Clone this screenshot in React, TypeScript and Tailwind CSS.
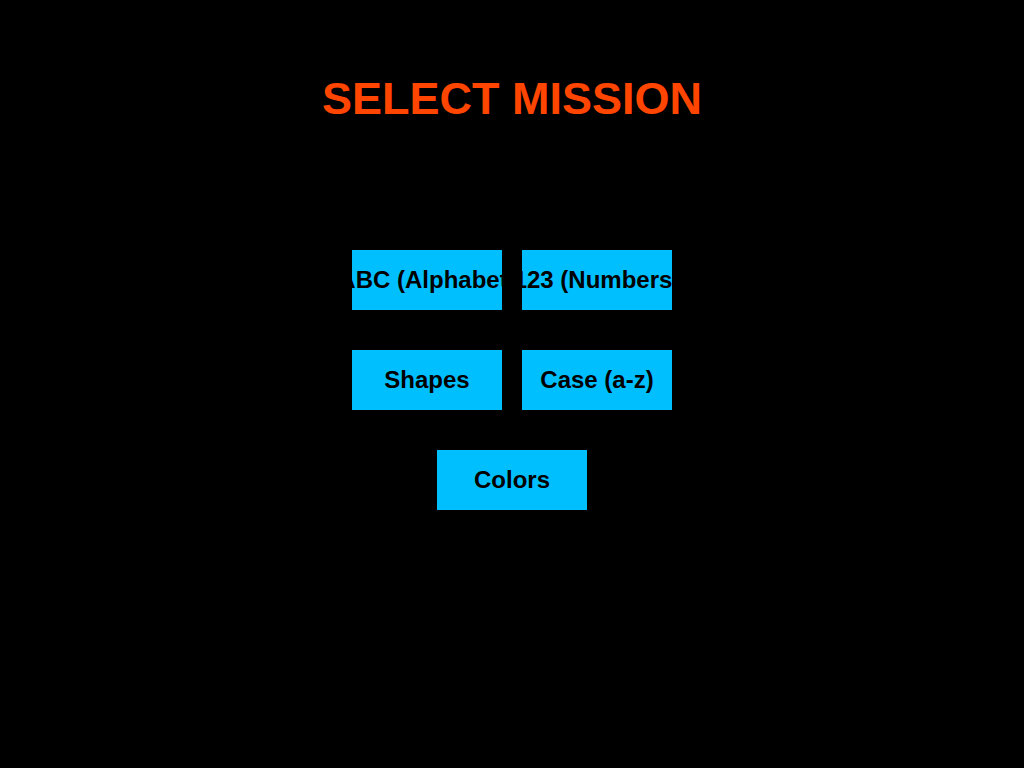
import React from "react";

const btn =
  "flex h-[60px] w-[150px] items-center justify-center overflow-hidden whitespace-nowrap bg-[#00bfff] text-[24px] font-bold text-black";

export default function App() {
  return (
    <div
      className="flex min-h-[768px] w-full flex-col items-center bg-black pt-[76px]"
      style={{ fontFamily: '"Liberation Sans", Arial, Helvetica, sans-serif' }}
    >
      <h1 className="h-[45px] text-[45px] font-bold leading-none text-[#ff4500]">
        SELECT MISSION
      </h1>
      <div className="mt-[129px] grid grid-cols-[150px_150px] gap-x-5 gap-y-10">
        <button className={btn}>ABC (Alphabet)</button>
        <button className={btn}>123 (Numbers)</button>
        <button className={btn}>Shapes</button>
        <button className={btn}>Case (a-z)</button>
        <div className="col-span-2 flex justify-center">
          <button className={btn}>Colors</button>
        </div>
      </div>
    </div>
  );
}
